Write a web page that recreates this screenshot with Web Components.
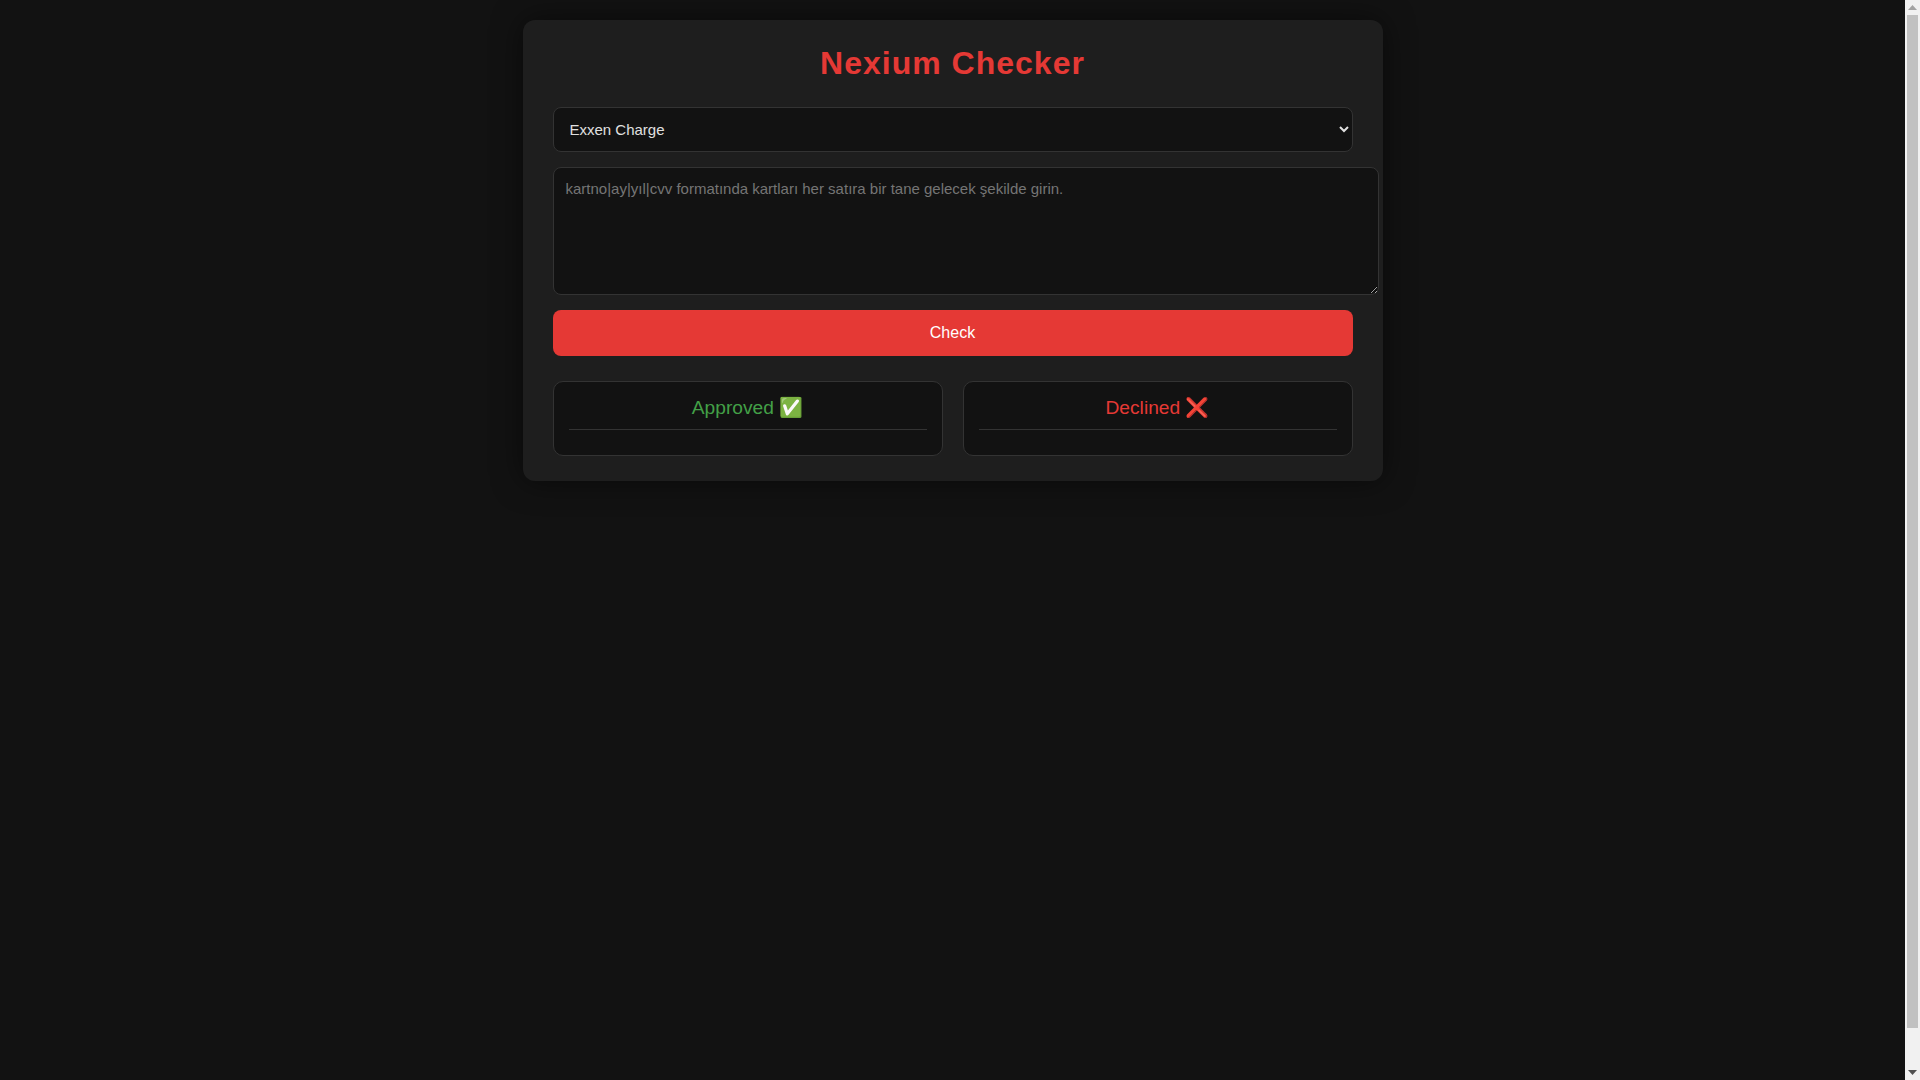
<!DOCTYPE html>
<html lang="tr">
<head>
<meta charset="utf-8">
<title>Nexium Checker</title>
<style>
  html { background: #121212; }
  body { margin: 0; height: 100vh; overflow: hidden; display: flex; background: #121212; color: #e0e0e0; font-family: "Liberation Sans", Arial, sans-serif; }
  main { flex: 1; min-width: 0; }
</style>
</head>
<body>
<template id="card-tpl">
  <style>
    :host { display: block; box-sizing: border-box; width: 860px; margin: 20px auto; padding: 25px 30px; background: #1e1e1e; border-radius: 12px; box-shadow: 0 0 30px rgba(0,0,0,.5); }
    h1 { margin: 0 0 25px; text-align: center; color: #e53935; font-size: 32px; line-height: 37px; font-weight: 700; letter-spacing: 1px; }
  </style>
  <h1><slot name="title"></slot></h1>
  <slot></slot>
</template>

<template id="form-tpl">
  <style>
    :host { display: block; }
    select, textarea { font-family: "Liberation Sans", Arial, sans-serif; font-size: 15px; border-radius: 8px; background: #121212; color: #e0e0e0; border: 1px solid #333; outline: 0; padding: 12px; margin: 0 0 15px; display: block; }
    select { box-sizing: border-box; width: 100%; height: 45px; }
    textarea { box-sizing: content-box; width: 100%; height: 102px; resize: vertical; }
    textarea::placeholder { color: #757575; opacity: 1; }
    button { display: block; box-sizing: border-box; width: 100%; height: 46px; padding: 0; font-family: "Liberation Sans", Arial, sans-serif; font-size: 16px; border-radius: 8px; background: #e53935; color: #fff; border: 0; cursor: pointer; }
  </style>
  <select><option>Exxen Charge</option></select>
  <textarea placeholder="kartno|ay|yıl|cvv formatında kartları her satıra bir tane gelecek şekilde girin."></textarea>
  <button type="button">Check</button>
</template>

<template id="results-tpl">
  <style>
    :host { display: grid; grid-template-columns: 1fr 1fr; gap: 20px; margin-top: 25px; }
  </style>
  <slot></slot>
</template>

<template id="panel-tpl">
  <style>
    :host { display: block; box-sizing: border-box; padding: 15px; background: #121212; border: 1px solid #333; border-radius: 10px; }
    .head { text-align: center; font-size: 19.2px; line-height: 22px; padding-bottom: 10px; margin-bottom: 10px; border-bottom: 1px solid #333; color: var(--tone); }
    .list { display: block; }
  </style>
  <div class="head"><slot></slot></div>
</template>

<template id="scrollbar-tpl">
  <style>
    :host { flex: none; width: 15px; height: 100vh; background: #f1f1f1; display: flex; flex-direction: column; align-items: center; }
    .btn { flex: none; width: 15px; height: 15px; display: flex; align-items: center; justify-content: center; }
    .thumb { flex: none; width: 11px; height: 1013px; background: #c1c1c1; }
    .track { flex: 1; }
    svg { display: block; width: 9px; height: 5px; }
  </style>
  <div class="btn"><svg viewBox="0 0 9 5"><path d="M4.5 0 9 5H0z" fill="#a3a3a3"/></svg></div>
  <div class="thumb"></div>
  <div class="track"></div>
  <div class="btn"><svg viewBox="0 0 9 5"><path d="M0 0h9L4.5 5z" fill="#505050"/></svg></div>
</template>

<main>
  <nx-card>
    <span slot="title">Nexium Checker</span>
    <nx-form></nx-form>
    <nx-results>
      <nx-panel style="--tone:#43a047">Approved ✅</nx-panel>
      <nx-panel style="--tone:#e53935">Declined ❌</nx-panel>
    </nx-results>
  </nx-card>
</main>
<nx-scrollbar></nx-scrollbar>

<script>
  for (const [name, tpl] of [['nx-card','card-tpl'],['nx-form','form-tpl'],['nx-results','results-tpl'],['nx-panel','panel-tpl'],['nx-scrollbar','scrollbar-tpl']]) {
    customElements.define(name, class extends HTMLElement {
      constructor() {
        super();
        this.attachShadow({ mode: 'open' }).appendChild(document.getElementById(tpl).content.cloneNode(true));
      }
    });
  }
</script>
</body>
</html>
